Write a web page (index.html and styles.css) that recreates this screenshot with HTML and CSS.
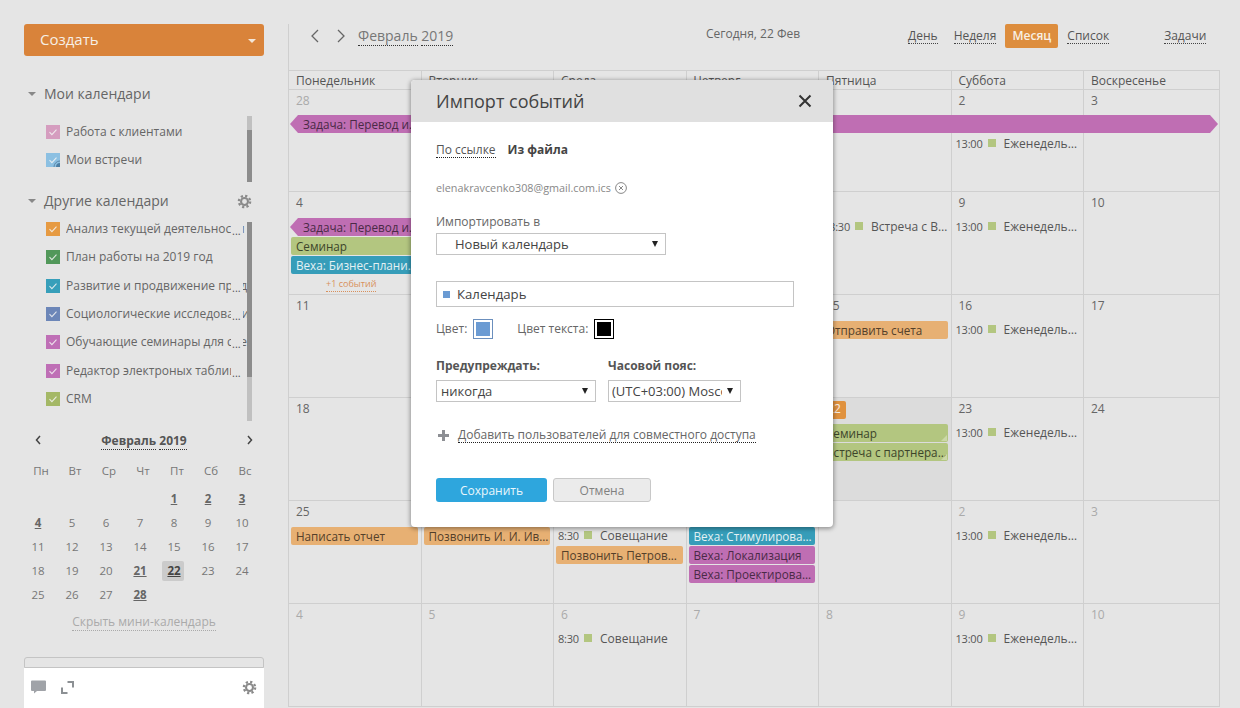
FILE: index.html
```html
<!DOCTYPE html>
<html lang="ru">
<head>
<meta charset="utf-8">
<title>Календарь</title>
<link rel="stylesheet" href="styles.css">
</head>
<body>
<div class="app">
  <aside class="sidebar">
    <button class="create">Создать<span class="create-caret"></span></button>
    <div class="sec-head first"><span class="tri"></span>Мои календари</div>
    <div class="cal-list mine">
      <span class="sb"><span class="sb-thumb t1"></span></span>
      <div class="cal-item"><span class="chk c-pink"><svg viewBox="0 0 14 14"><path d="M3.500 7.200l2.400 2.400 4.600-5" class="tick"/></svg></span><span class="cal-name">Работа с клиентами</span></div>
      <div class="cal-item"><span class="chk c-sky"><svg viewBox="0 0 14 14"><path d="M3.500 7.200l2.400 2.400 4.600-5" class="tick"/><path d="M14 14h-4a4 4 0 0 1 4-4z" class="wifi"/><path d="M8 14a6 6 0 0 1 6-6" class="wifi-arc"/></svg></span><span class="cal-name">Мои встречи</span></div>
    </div>
    <div class="sec-head second"><span class="tri"></span>Другие календари
      <svg class="gear side-gear" viewBox="0 0 16 16"><circle cx="8" cy="8" r="6" class="gear-teeth"/><circle cx="8" cy="8" r="3.700" class="gear-ring"/></svg>
    </div>
    <div class="cal-list others">
      <span class="sb"><span class="sb-thumb t2"></span></span>
      <div class="cal-item"><span class="chk c-orange"><svg viewBox="0 0 14 14"><path d="M3.500 7.200l2.400 2.400 4.600-5" class="tick"/></svg></span><span class="cal-name cut">Анализ текущей деятельности</span></div>
      <div class="cal-item"><span class="chk c-green"><svg viewBox="0 0 14 14"><path d="M3.500 7.200l2.400 2.400 4.600-5" class="tick"/></svg></span><span class="cal-name">План работы на 2019 год</span></div>
      <div class="cal-item"><span class="chk c-teal"><svg viewBox="0 0 14 14"><path d="M3.500 7.200l2.400 2.400 4.600-5" class="tick"/></svg></span><span class="cal-name cut">Развитие и продвижение продукта</span></div>
      <div class="cal-item"><span class="chk c-blue"><svg viewBox="0 0 14 14"><path d="M3.500 7.200l2.400 2.400 4.600-5" class="tick"/></svg></span><span class="cal-name cut">Социологические исследования</span></div>
      <div class="cal-item"><span class="chk c-violet"><svg viewBox="0 0 14 14"><path d="M3.500 7.200l2.400 2.400 4.600-5" class="tick"/></svg></span><span class="cal-name cut">Обучающие семинары для специалистов</span></div>
      <div class="cal-item"><span class="chk c-violet"><svg viewBox="0 0 14 14"><path d="M3.500 7.200l2.400 2.400 4.600-5" class="tick"/></svg></span><span class="cal-name cut">Редактор электроных таблиц</span></div>
      <div class="cal-item"><span class="chk c-olive"><svg viewBox="0 0 14 14"><path d="M3.500 7.200l2.400 2.400 4.600-5" class="tick"/></svg></span><span class="cal-name">CRM</span></div>
    </div>
    <div class="mini-head">
      <svg class="mini-arrow" viewBox="0 0 6 10"><path d="M5 1L1.500 5 5 9"/></svg>
      <span class="mini-title"><span class="dot">Февраль</span> <span class="dot">2019</span></span>
      <svg class="mini-arrow" viewBox="0 0 6 10"><path d="M1 1l3.500 4L1 9"/></svg>
    </div>
    <div class="mini-grid dows">
      <span>Пн</span><span>Вт</span><span>Ср</span><span>Чт</span><span>Пт</span><span>Сб</span><span>Вс</span>
    </div>
    <div class="mini-grid days">
      <span></span><span></span><span></span><span></span><span class="has">1</span><span class="has">2</span><span class="has">3</span>
      <span class="has">4</span><span>5</span><span>6</span><span>7</span><span>8</span><span>9</span><span>10</span>
      <span>11</span><span>12</span><span>13</span><span>14</span><span>15</span><span>16</span><span>17</span>
      <span>18</span><span>19</span><span>20</span><span class="has">21</span><span class="has today">22</span><span>23</span><span>24</span>
      <span>25</span><span>26</span><span>27</span><span class="has">28</span><span></span><span></span><span></span>
    </div>
    <div class="mini-hide"><span class="hide-link">Скрыть мини-календарь</span></div>
    <div class="dock">
      <div class="dock-tab"></div>
      <div class="dock-body">
        <svg class="dock-ic" viewBox="0 0 15 14"><path d="M0 1.500a1 1 0 0 1 1-1h13a1 1 0 0 1 1 1V10a1 1 0 0 1-1 1H6l-3 2.500V11H1a1 1 0 0 1-1-1z" class="fill-g"/></svg>
        <svg class="dock-ic exp" viewBox="0 0 13 13"><path d="M6.500 1H12v5.500M1 6.500V12h5.500" class="line-g"/></svg>
        <svg class="gear dock-gear" viewBox="0 0 16 16"><circle cx="8" cy="8" r="6" class="gear-teeth"/><circle cx="8" cy="8" r="3.700" class="gear-ring"/></svg>
      </div>
    </div>
  </aside>

  <main class="main">
    <header class="toolbar">
      <svg class="nav-ar" viewBox="0 0 10 14"><path d="M8 1L2 7l6 6"/></svg>
      <svg class="nav-ar" viewBox="0 0 10 14"><path d="M2 1l6 6-6 6"/></svg>
      <div class="period"><span class="dot">Февраль</span> <span class="dot">2019</span></div>
      <div class="today-label">Сегодня, 22 Фев</div>
      <nav class="views">
        <span class="view dot">День</span>
        <span class="view dot">Неделя</span>
        <span class="view-on">Месяц</span>
        <span class="view dot">Список</span>
        <span class="view dot tasks">Задачи</span>
      </nav>
    </header>

    <div class="table">
      <div class="week-names">
        <div>Понедельник</div><div>Вторник</div><div>Среда</div><div>Четверг</div><div>Пятница</div><div>Суббота</div><div>Воскресенье</div>
      </div>

      <div class="week week-first">
        <div class="span-bar"><span class="bar-text">Задача: Перевод интерфейса</span></div>
        <div class="cell"><div class="date off">28</div></div>
        <div class="cell"><div class="date off">29</div></div>
        <div class="cell"><div class="date off">30</div></div>
        <div class="cell"><div class="date off">31</div></div>
        <div class="cell"><div class="date">1</div></div>
        <div class="cell"><div class="date">2</div><div class="spacer"></div><div class="timed"><span class="t">13:00</span><i class="sq"></i><span class="tt">Еженедельное совещание</span></div></div>
        <div class="cell"><div class="date">3</div></div>
      </div>

      <div class="week">
        <div class="cell"><div class="date">4</div>
          <div class="ev e-violet arrow-l"><span class="bar-text">Задача: Перевод интерфейса</span></div>
          <div class="ev e-olive">Семинар</div>
          <div class="ev e-teal">Веха: Бизнес-планирование</div>
          <div class="more"><span class="more-link">+1 событий</span></div>
        </div>
        <div class="cell"><div class="date">5</div></div>
        <div class="cell"><div class="date">6</div></div>
        <div class="cell"><div class="date">7</div></div>
        <div class="cell"><div class="date">8</div><div class="timed"><span class="t">18:30</span><i class="sq"></i><span class="tt">Встреча с Волковым</span></div></div>
        <div class="cell"><div class="date">9</div><div class="timed"><span class="t">13:00</span><i class="sq"></i><span class="tt">Еженедельное совещание</span></div></div>
        <div class="cell"><div class="date">10</div></div>
      </div>

      <div class="week">
        <div class="cell"><div class="date">11</div></div>
        <div class="cell"><div class="date">12</div></div>
        <div class="cell"><div class="date">13</div></div>
        <div class="cell"><div class="date">14</div></div>
        <div class="cell"><div class="date">15</div><div class="ev e-orange">Отправить счета</div></div>
        <div class="cell"><div class="date">16</div><div class="timed"><span class="t">13:00</span><i class="sq"></i><span class="tt">Еженедельное совещание</span></div></div>
        <div class="cell"><div class="date">17</div></div>
      </div>

      <div class="week">
        <div class="cell"><div class="date">18</div></div>
        <div class="cell"><div class="date">19</div></div>
        <div class="cell"><div class="date">20</div></div>
        <div class="cell"><div class="date">21</div></div>
        <div class="cell cell-today"><div class="date"><span class="badge">22</span></div>
          <div class="ev e-olive grip">Семинар</div>
          <div class="ev e-olive grip">Встреча с партнерами</div>
        </div>
        <div class="cell"><div class="date">23</div><div class="timed"><span class="t">13:00</span><i class="sq"></i><span class="tt">Еженедельное совещание</span></div></div>
        <div class="cell"><div class="date">24</div></div>
      </div>

      <div class="week">
        <div class="cell"><div class="date">25</div><div class="ev e-orange">Написать отчет</div></div>
        <div class="cell"><div class="date">26</div><div class="ev e-orange">Позвонить И. И. Иванову</div></div>
        <div class="cell"><div class="date">27</div>
          <div class="timed"><span class="t">8:30</span><i class="sq"></i><span class="tt">Совещание</span></div>
          <div class="ev e-orange">Позвонить Петрову Петру</div>
        </div>
        <div class="cell"><div class="date">28</div>
          <div class="ev e-teal">Веха: Стимулирование сбыта</div>
          <div class="ev e-violet">Веха: Локализация</div>
          <div class="ev e-violet">Веха: Проектирование сайта</div>
        </div>
        <div class="cell"><div class="date">1</div></div>
        <div class="cell"><div class="date off">2</div><div class="timed"><span class="t">13:00</span><i class="sq"></i><span class="tt">Еженедельное совещание</span></div></div>
        <div class="cell"><div class="date off">3</div></div>
      </div>

      <div class="week">
        <div class="cell"><div class="date off">4</div></div>
        <div class="cell"><div class="date off">5</div></div>
        <div class="cell"><div class="date off">6</div><div class="timed"><span class="t">8:30</span><i class="sq"></i><span class="tt">Совещание</span></div></div>
        <div class="cell"><div class="date off">7</div></div>
        <div class="cell"><div class="date off">8</div></div>
        <div class="cell"><div class="date off">9</div><div class="timed"><span class="t">13:00</span><i class="sq"></i><span class="tt">Еженедельное совещание</span></div></div>
        <div class="cell"><div class="date off">10</div></div>
      </div>
    </div>
  </main>

  <section class="modal">
    <div class="modal-head">
      <h2 class="modal-title">Импорт событий</h2>
      <svg class="modal-x" viewBox="0 0 14 14"><path d="M1.500 1.500l11 11M12.500 1.500l-11 11"/></svg>
    </div>
    <div class="modal-body">
      <div class="tabs"><span class="dark-dot">По ссылке</span><b class="tab-on">Из файла</b></div>
      <div class="file">elenakravcenko308@gmail.com.ics
        <svg class="file-x" viewBox="0 0 12 12"><circle cx="6" cy="6" r="5.400"/><path d="M4 4l4 4M8 4l-4 4"/></svg>
      </div>
      <div class="lbl">Импортировать в</div>
      <div class="sel sel-wide"><select class="sel-in pad-big"><option>Новый календарь</option></select></div>
      <div class="field"><i class="field-sq"></i><input class="field-in" value="Календарь"></div>
      <div class="colors">
        <span>Цвет:</span><span class="swatch sw-blue"><i></i></span>
        <span class="lbl-text">Цвет текста:</span><span class="swatch sw-black"><i></i></span>
      </div>
      <div class="two">
        <div class="col-a">
          <div class="lbl-b">Предупреждать:</div>
          <div class="sel sel-a"><select class="sel-in"><option>никогда</option></select></div>
        </div>
        <div class="col-b">
          <div class="lbl-b">Часовой пояс:</div>
          <div class="sel sel-b"><select class="sel-in tz"><option>(UTC+03:00) Moscow</option></select></div>
        </div>
      </div>
      <div class="share">
        <svg class="plus" viewBox="0 0 11 11"><path d="M5.500 0v11M0 5.500h11"/></svg>
        <span class="dark-dot">Добавить пользователей для совместного доступа</span>
      </div>
      <div class="actions">
        <button class="btn-save">Сохранить</button>
        <button class="btn-cancel">Отмена</button>
      </div>
    </div>
  </section>
</div>
</body>
</html>
```

FILE: styles.css
```css
* { box-sizing: border-box; }
html, body { margin: 0; height: 708px; overflow: hidden; }
body { background: #e5e5e5; color: #555; font: 12px/16px "Open Sans", "Liberation Sans", sans-serif; }
.app { position: relative; display: flex; width: 1240px; height: 708px; overflow: hidden; }
.dot { border-bottom: 1px dotted #444; }

/* Sidebar */
.sidebar { width: 288px; flex: none; height: 708px; padding: 24px 24px 0; display: flex; flex-direction: column; }
.create { position: relative; display: block; width: 240px; height: 32px; border: 0; border-radius: 3px; background: #d9833a; color: #f6efe6; font: 15px/30px "Open Sans", sans-serif; text-align: left; padding: 0 0 2px 16px; }
.create-caret { position: absolute; right: 8px; top: 15px; border: 4px solid transparent; border-top-color: #f3e6d8; border-bottom: 0; }
.sec-head { position: relative; display: flex; align-items: center; height: 20px; font-size: 14px; color: #666; padding-left: 20px; width: 230px; }
.sec-head.first { margin-top: 28px; }
.sec-head.second { margin-top: 17px; }
.tri { position: absolute; left: 4px; top: 8px; border: 4px solid transparent; border-top-color: #888; border-bottom: 0; }
.side-gear { position: absolute; right: 2px; top: 3px; }
.gear { width: 15px; height: 15px; }
.gear-teeth { fill: none; stroke: #8a8a8a; stroke-width: 2.500; stroke-dasharray: 2.350 2.360; }
.gear-ring { fill: none; stroke: #8a8a8a; stroke-width: 2.200; }
.cal-list { position: relative; width: 228px; margin-left: 22px; }
.cal-list.mine { margin-top: 14px; height: 56px; }
.cal-list.others { margin-top: 4px; height: 198px; }
.sb { position: absolute; left: 201px; width: 5px; background: #c0c0c0; }
.mine .sb { top: -2px; height: 66px; }
.others .sb { top: 7px; height: 199px; }
.sb-thumb { position: absolute; left: 0; width: 5px; background: #8c8c8c; }
.t1 { top: 14px; height: 52px; }
.t2 { top: 0; height: 155px; }
.cal-item { display: flex; align-items: center; height: 28.300px; }
.chk { flex: none; width: 14px; height: 14px; margin-right: 6px; display: block; }
.chk svg { display: block; width: 14px; height: 14px; }
.tick { fill: none; stroke: #f4f4f4; stroke-width: 1.100; opacity: .85; }
.wifi { fill: #4d7fa5; }
.wifi-arc { fill: none; stroke: #5c88aa; stroke-width: 1; }
.c-pink { background: #d59dbf; }
.c-sky { background: #8cc0e2; }
.c-orange { background: #e69a42; }
.c-green { background: #52985a; }
.c-teal { background: #379fba; }
.c-blue { background: #6c86b8; }
.c-violet { background: #bf6fb6; }
.c-olive { background: #a4b866; }
.cal-name { position: relative; display: block; width: 181px; white-space: nowrap; overflow: hidden; font-size: 12px; color: #666; }
.cut::after { content: "..."; position: absolute; right: 4px; top: 0; width: 11px; height: 16px; background: #e5e5e5; line-height: 20px; color: #555; font-size: 11px; padding-left: 1px; }

/* Mini calendar */
.mini-head { display: flex; justify-content: space-between; align-items: center; height: 20px; margin-top: 17px; padding: 0 11px; width: 240px; }
.mini-arrow { width: 6px; height: 10px; fill: none; stroke: #444; stroke-width: 1.500; }
.mini-title { font-weight: 700; font-size: 12px; color: #555; line-height: 15px; }
.mini-title .dot { border-bottom-color: #333; }
.mini-grid { display: grid; grid-template-columns: repeat(7, 34px); text-align: center; font-size: 11.500px; color: #777; }
.dows { margin-top: 11px; height: 20px; line-height: 20px; }
.days { margin: 6px 0 0 -3px; grid-auto-rows: 24px; }
.days span { display: flex; align-items: center; justify-content: center; height: 24px; }
.has { font-weight: 700; text-decoration: underline; color: #666; }
.today { position: relative; color: #444; z-index: 0; }
.today::before { content: ""; position: absolute; z-index: -1; left: 5px; top: 2px; width: 22px; height: 20px; border-radius: 2px; background: #cbcbcb; }
.mini-hide { margin-top: 7px; width: 240px; text-align: center; font-size: 12px; color: #aaa; line-height: 16px; }
.hide-link { border-bottom: 1px dotted #aaa; display: inline-block; }
.dock { margin-top: auto; width: 240px; }
.dock-tab { height: 11px; border: 1px solid #c4c4c4; border-radius: 3px 3px 0 0; }
.dock-body { display: flex; align-items: center; height: 40px; background: #fff; padding: 0 7px 2px; }
.dock-ic { width: 15px; height: 14px; }
.exp { width: 13px; height: 13px; margin-left: 15px; }
.fill-g { fill: #a0a3a8; }
.line-g { fill: none; stroke: #8c9094; stroke-width: 2; }
.dock-gear { margin-left: auto; }

/* Main */
.main { flex: 1; margin-top: 24px; min-width: 0; }
.toolbar { display: flex; align-items: center; height: 46px; padding: 0 0 22px 21px; border-left: 1px solid #cfcfcf; }
.nav-ar { width: 10px; height: 14px; margin-right: 16px; fill: none; stroke: #666; stroke-width: 1.300; }
.nav-ar + .nav-ar { margin-right: 12px; }
.period { font-size: 14px; line-height: 18px; color: #777; width: 348px; }
.period .dot { border-bottom-color: #333; display: inline-block; }
.today-label { font-size: 12px; color: #666; width: 202px; margin-top: -4px; }
.views { display: flex; align-items: center; font-size: 12px; color: #555; }
.view { line-height: 15px; margin-top: -1px; }
.views .view { margin-right: 16px; }
.views .view:nth-child(2) { margin-right: 9px; }
.views .view:nth-child(4) { margin-right: 55px; }
.views .tasks { margin-right: 0; }
.view-on { display: block; width: 53px; height: 24px; line-height: 23px; margin-right: 9px; text-align: center; border-radius: 2px; background: #dd8d3d; color: #f8f0e4; font-weight: 600; }

.table { width: 932px; border-top: 1px solid #cfcfcf; border-left: 1px solid #cfcfcf; border-right: 1px solid #cfcfcf; }
.week-names, .week { display: grid; grid-template-columns: repeat(6, 132.500px) 1fr; }
.week-names { height: 19px; border-bottom: 1px solid #cfcfcf; line-height: 20px; color: #555; font-size: 12px; }
.week-names div { border-right: 1px solid #cfcfcf; padding-left: 7px; }
.week-names div:last-child { border-right: 0; }
.week { position: relative; height: 103px; border-bottom: 1px solid #cfcfcf; }
.week-first { height: 102px; }
.cell { border-right: 1px solid #cfcfcf; min-width: 0; }
.cell:last-child { border-right: 0; }
.cell-today { background: #dcdcdc; }
.date { height: 26px; padding: 3px 0 0 7px; font-size: 12px; line-height: 16px; color: #666; }
.date.off { color: #aaa; }
.badge { display: inline-block; background: #e0923f; color: #f7efe5; width: 24px; height: 18px; margin-left: -4px; text-align: center; border-radius: 2px; }
.ev { position: relative; height: 18px; margin: 0 3px 1px 2px; padding-left: 5px; border-radius: 2px; line-height: 18px; font-size: 11.700px; white-space: nowrap; overflow: hidden; text-overflow: ellipsis; }
.e-violet { background: #bf6eb3; color: #4a2a46; }
.e-olive { background: #b3c680; color: #3d452a; }
.e-teal { background: #369db9; color: #e4f1f4; }
.e-orange { background: #e7b073; color: #54402a; }
.grip::after { content: ""; position: absolute; right: 1px; bottom: 1px; border: 3.500px solid transparent; border-right-color: #ccd8a8; border-bottom-color: #ccd8a8; }
.bar-text { display: block; width: 116px; overflow: hidden; text-overflow: ellipsis; white-space: nowrap; }
.arrow-l { margin-left: 1px; padding-left: 13px; border-radius: 0; clip-path: polygon(8px 0, 100% 0, 100% 100%, 8px 100%, 0 50%); margin-right: -200px; }
.span-bar { position: absolute; left: 1px; top: 25px; width: 928px; height: 18px; padding-left: 13px; background: #bf6eb3; color: #4a2a46; line-height: 18px; font-size: 11.700px; clip-path: polygon(8px 0, calc(100% - 8px) 0, 100% 50%, calc(100% - 8px) 100%, 8px 100%, 0 50%); }
.spacer { height: 19px; }
.timed { display: flex; align-items: center; height: 18px; padding-left: 4px; margin-bottom: 1px; font-size: 12px; color: #555; white-space: nowrap; }
.t { font-size: 11px; letter-spacing: -.2px; }
.sq { flex: none; width: 8px; height: 8px; margin: -2px 8px 0 5px; background: #b3c680; }
.tt { min-width: 0; overflow: hidden; text-overflow: ellipsis; padding-right: 2px; }
.more { text-align: center; font-size: 9px; line-height: 14px; color: #d8905c; margin-top: 3px; padding-right: 7px; }
.more-link { border-bottom: 1px dotted #d8905c; display: inline-block; }

/* Modal */
.modal { position: absolute; left: 411px; top: 80px; width: 422px; height: 447px; border-radius: 4px; background: #fff; overflow: hidden; box-shadow: 0 1px 4px 1px rgba(0, 0, 0, .35); color: #555; }
.modal-head { display: flex; align-items: center; justify-content: space-between; height: 42px; background: #e0e0e0; padding: 0 21px 0 25px; }
.modal-title { margin: 0; font-size: 18px; font-weight: 400; color: #444; }
.modal-x { width: 14px; height: 14px; fill: none; stroke: #333; stroke-width: 2; }
.modal-body { padding: 20px 0 0 25px; }
.tabs { display: flex; height: 16px; line-height: 16px; font-size: 12px; }
.dark-dot { border-bottom: 1px dotted #222; line-height: 15px; height: 16px; display: inline-block; }
.tab-on { margin-left: 12px; color: #444; font-weight: 700; }
.file { display: flex; align-items: center; margin-top: 22px; height: 16px; font-size: 10.800px; color: #888; }
.file-x { width: 12px; height: 12px; margin-left: 4px; fill: none; stroke: #888; stroke-width: 1; }
.lbl { margin-top: 18px; height: 16px; font-size: 12px; color: #666; }
.sel { position: relative; height: 22px; border: 1px solid #c4c4c4; margin-top: 3px; }
.sel::after { content: ""; position: absolute; right: 7px; top: 7px; border: 3.500px solid transparent; border-top: 6px solid #222; border-bottom: 0; }
.sel-wide { width: 230px; }
.sel-a { width: 160px; margin-top: 6px; }
.sel-b { width: 133px; margin-top: 6px; }
.sel-in { appearance: none; display: block; width: 100%; height: 20px; border: 0; outline: 0; padding: 0 0 0 4px; margin: 0; background: transparent; font: 13px/20px "Open Sans", sans-serif; color: #444; }
.pad-big { padding-left: 18px; }
.tz { width: 113px; padding-left: 3px; }
.field { display: flex; align-items: center; width: 358px; height: 26px; margin-top: 26px; border: 1px solid #c4c4c4; padding-left: 6px; }
.field-sq { flex: none; width: 7px; height: 7px; background: #6b9bd3; }
.field-in { border: 0; outline: 0; padding: 0 0 0 7px; width: 300px; font: 13.200px "Open Sans", sans-serif; color: #444; background: transparent; }
.colors { display: flex; align-items: center; margin-top: 12px; height: 20px; font-size: 12px; color: #666; }
.swatch { display: block; width: 20px; height: 20px; padding: 2px; border: 1px solid #000; margin-left: 6px; }
.swatch i { display: block; width: 100%; height: 100%; }
.sw-blue { border-color: #6b8fbd; }
.sw-blue i { background: #6b9bd3; }
.sw-black i { background: #000; }
.lbl-text { margin-left: 24px; }
.two { display: flex; margin-top: 19px; }
.col-a { width: 172px; }
.lbl-b { height: 16px; font-size: 12px; font-weight: 700; color: #555; }
.share { display: flex; align-items: center; margin-top: 25px; height: 16px; font-size: 12px; color: #666; padding-left: 2px; }
.plus { width: 11px; height: 11px; margin-right: 9px; fill: none; stroke: #8d8f94; stroke-width: 3; }
.actions { display: flex; gap: 6px; margin-top: 35px; }
.btn-save, .btn-cancel { height: 24px; border-radius: 3px; font: 12px "Open Sans", sans-serif; padding: 0; }
.btn-save { width: 111px; border: 0; background: #2ea6dd; color: #eaf6fc; }
.btn-cancel { width: 98px; border: 1px solid #c8c8c8; background: #ebebeb; color: #808080; }
```
